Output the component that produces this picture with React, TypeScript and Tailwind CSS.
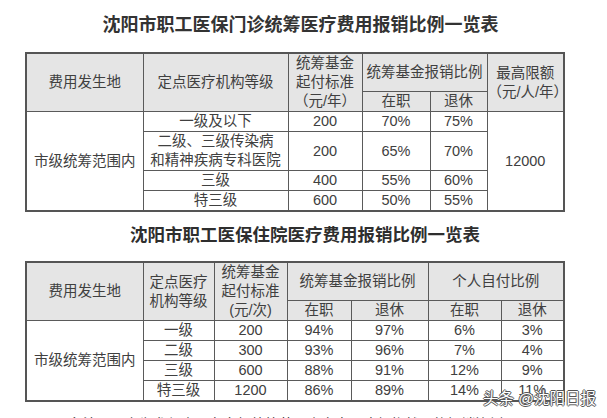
import React from "react";

const cell = "border border-[#5a5a5a] text-center align-middle p-0 leading-[19px]";
const hd = cell + " bg-[#e5e5e5]";

function Table1() {
  return (
    <table className="border-collapse table-fixed w-[538px] ml-[25px] border-2 border-[#555] text-[14.5px] text-[#404040]">
      <colgroup>
        <col className="w-[117px]" />
        <col className="w-[145px]" />
        <col className="w-[74px]" />
        <col className="w-[68px]" />
        <col className="w-[57px]" />
        <col className="w-[77px]" />
      </colgroup>
      <tbody>
        <tr className="h-[38px]">
          <td rowSpan={2} className={hd}>费用发生地</td>
          <td rowSpan={2} className={hd}>定点医疗机构等级</td>
          <td rowSpan={2} className={hd}>
            统筹基金
            <br />
            起付标准
            <br />
            （元/年）
          </td>
          <td colSpan={2} className={hd}>统筹基金报销比例</td>
          <td rowSpan={2} className={hd}>
            最高限额
            <br />
            （元/人/年）
          </td>
        </tr>
        <tr className="h-[19px]">
          <td className={hd}>在职</td>
          <td className={hd}>退休</td>
        </tr>
        <tr className="h-[19px]">
          <td rowSpan={4} className={cell}>市级统筹范围内</td>
          <td className={cell}>一级及以下</td>
          <td className={cell}>200</td>
          <td className={cell}>70%</td>
          <td className={cell}>75%</td>
          <td rowSpan={4} className={cell}>12000</td>
        </tr>
        <tr className="h-[39px]">
          <td className={cell}>
            二级、三级传染病
            <br />
            和精神疾病专科医院
          </td>
          <td className={cell}>200</td>
          <td className={cell}>65%</td>
          <td className={cell}>70%</td>
        </tr>
        <tr className="h-[19px]">
          <td className={cell}>三级</td>
          <td className={cell}>400</td>
          <td className={cell}>55%</td>
          <td className={cell}>60%</td>
        </tr>
        <tr className="h-[19px]">
          <td className={cell}>特三级</td>
          <td className={cell}>600</td>
          <td className={cell}>50%</td>
          <td className={cell}>55%</td>
        </tr>
      </tbody>
    </table>
  );
}

const rows2 = [
  ["一级", "200", "94%", "97%", "6%", "3%"],
  ["二级", "300", "93%", "96%", "7%", "4%"],
  ["三级", "600", "88%", "91%", "12%", "9%"],
  ["特三级", "1200", "86%", "89%", "14%", "11%"],
];

function Table2() {
  return (
    <table className="border-collapse table-fixed w-[538px] ml-[25px] border-2 border-[#555] text-[14.5px] text-[#404040]">
      <colgroup>
        <col className="w-[117px]" />
        <col className="w-[71px]" />
        <col className="w-[73px]" />
        <col className="w-[64px]" />
        <col className="w-[77px]" />
        <col className="w-[73px]" />
        <col className="w-[63px]" />
      </colgroup>
      <tbody>
        <tr className="h-[38px]">
          <td rowSpan={2} className={hd}>费用发生地</td>
          <td rowSpan={2} className={hd}>
            定点医疗
            <br />
            机构等级
          </td>
          <td rowSpan={2} className={hd}>
            统筹基金
            <br />
            起付标准
            <br />
            (元/次)
          </td>
          <td colSpan={2} className={hd}>统筹基金报销比例</td>
          <td colSpan={2} className={hd}>个人自付比例</td>
        </tr>
        <tr className="h-[19px]">
          <td className={hd}>在职</td>
          <td className={hd}>退休</td>
          <td className={hd}>在职</td>
          <td className={hd}>退休</td>
        </tr>
        {rows2.map((r, i) => (
          <tr key={i} className="h-[20px]">
            {i === 0 && (
              <td rowSpan={4} className={cell}>
                市级统筹范围内
              </td>
            )}
            {r.map((v, j) => (
              <td key={j} className={cell}>
                {v}
              </td>
            ))}
          </tr>
        ))}
      </tbody>
    </table>
  );
}

export default function App() {
  return (
    <div className="relative w-[607px] h-[418px] overflow-hidden bg-white font-['Liberation_Sans','Noto_Sans_CJK_SC',sans-serif]">
      <div className="pt-[13px] h-[37px] leading-[24px] text-center text-[18px] font-bold text-[#333] pr-[6px]">
        沈阳市职工医保门诊统筹医疗费用报销比例一览表
      </div>
      <div className="mt-[15px]">
        <Table1 />
      </div>
      <div className="mt-[11px] h-[24px] leading-[24px] text-center text-[17.5px] font-bold text-[#2e2e2e] pl-[3px]">
        沈阳市职工医保住院医疗费用报销比例一览表
      </div>
      <div className="mt-[14px]">
        <Table2 />
      </div>
      <div className="mt-[13px] pl-[55px] text-[14px] leading-[18px] text-[#333] whitespace-nowrap">
        【备注】以上为参保人员在市级统筹范围内定点医疗机构就医的报销比例
      </div>
      <div className="absolute left-[483px] top-[390px] text-[15.5px] leading-[18px] text-white whitespace-nowrap [text-shadow:1px_0_#555,-1px_0_#555,0_1px_#555,0_-1px_#555]">
        头条 @沈阳日报
      </div>
    </div>
  );
}
